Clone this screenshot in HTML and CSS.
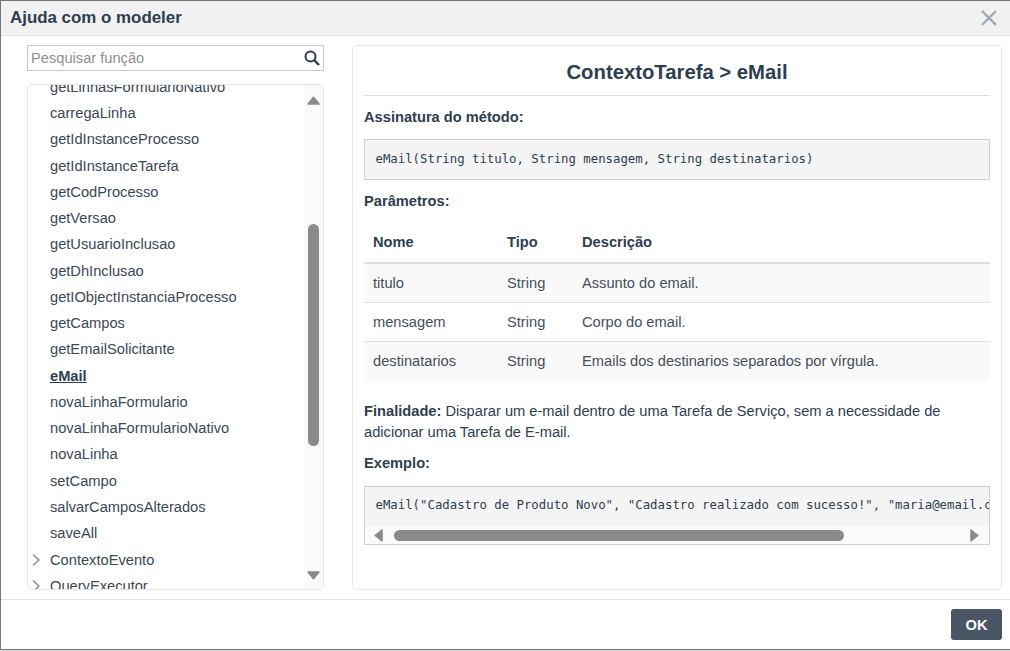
FILE: index.html
```html
<!doctype html>
<html>
    <head>
        <title>Ajuda com o modeler</title>
        <link rel="stylesheet" href="styles.css">
    </head>
    <body>
        <div class="modal">
            <div class="modal-header">
                <h1>Ajuda com o modeler</h1>
                <svg class="close" width="18" height="18" viewBox="0 0 18 18"><path d="M2 2 L16 16 M16 2 L2 16" stroke="#a3a9b2" stroke-width="2.4" fill="none"/></svg>
            </div>
            <div class="modal-body">
                <div class="sidebar">
                    <div class="search">
                        <span class="search-text">Pesquisar função</span>
                        <svg width="16" height="16" viewBox="0 0 16 16"><circle cx="6.5" cy="6.5" r="5" stroke="#2d3e50" stroke-width="2" fill="none"/><path d="M10.2 10.2 L15 15" stroke="#2d3e50" stroke-width="2.4"/></svg>
                    </div>
                    <div class="tree">
                        <ul class="tree-list">
                            <li>getLinhasFormularioNativo</li>
                            <li>carregaLinha</li>
                            <li>getIdInstanceProcesso</li>
                            <li>getIdInstanceTarefa</li>
                            <li>getCodProcesso</li>
                            <li>getVersao</li>
                            <li>getUsuarioInclusao</li>
                            <li>getDhInclusao</li>
                            <li>getIObjectInstanciaProcesso</li>
                            <li>getCampos</li>
                            <li>getEmailSolicitante</li>
                            <li class="active">eMail</li>
                            <li>novaLinhaFormulario</li>
                            <li>novaLinhaFormularioNativo</li>
                            <li>novaLinha</li>
                            <li>setCampo</li>
                            <li>salvarCamposAlterados</li>
                            <li>saveAll</li>
                            <li class="group"><svg width="10" height="14" viewBox="0 0 10 14"><path d="M2 1.5 L8 7 L2 12.5" stroke="#8c8c8c" stroke-width="1.4" fill="none"/></svg>ContextoEvento</li>
                            <li class="group"><svg width="10" height="14" viewBox="0 0 10 14"><path d="M2 1.5 L8 7 L2 12.5" stroke="#8c8c8c" stroke-width="1.4" fill="none"/></svg>QueryExecutor</li>
                        </ul>
                        <div class="vscroll">
                            <svg class="arrow-up" width="13" height="9" viewBox="0 0 13 9"><path d="M6.5 1.2 L12 8 L1 8 Z" fill="#8a8a8a" stroke="#8a8a8a" stroke-width="1.5" stroke-linejoin="round"/></svg>
                            <span class="vthumb"></span>
                            <svg class="arrow-down" width="13" height="9" viewBox="0 0 13 9"><path d="M6.5 7.8 L12 1 L1 1 Z" fill="#8a8a8a" stroke="#8a8a8a" stroke-width="1.5" stroke-linejoin="round"/></svg>
                        </div>
                    </div>
                </div>
                <div class="content">
                    <h2>ContextoTarefa &gt; eMail</h2>
                    <h3 class="label-sig">Assinatura do método:</h3>
                    <pre class="code">eMail(String titulo, String mensagem, String destinatarios)</pre>
                    <h3 class="label-params">Parâmetros:</h3>
                    <table class="params">
                        <thead>
                            <tr><th class="col-name">Nome</th><th class="col-type">Tipo</th><th>Descrição</th></tr>
                        </thead>
                        <tbody>
                            <tr><td>titulo</td><td>String</td><td>Assunto do email.</td></tr>
                            <tr><td>mensagem</td><td>String</td><td>Corpo do email.</td></tr>
                            <tr><td>destinatarios</td><td>String</td><td>Emails dos destinarios separados por vírgula.</td></tr>
                        </tbody>
                    </table>
                    <p class="purpose"><b>Finalidade:</b> Disparar um e-mail dentro de uma Tarefa de Serviço, sem a necessidade de adicionar uma Tarefa de E-mail.</p>
                    <h3 class="label-example">Exemplo:</h3>
                    <div class="example">
                        <pre class="example-code">eMail("Cadastro de Produto Novo", "Cadastro realizado com sucesso!", "maria@email.com")</pre>
                        <div class="hscroll">
                            <svg class="arrow-left" width="9" height="13" viewBox="0 0 9 13"><path d="M1.2 6.5 L8 1 L8 12 Z" fill="#8a8a8a" stroke="#8a8a8a" stroke-width="1.5" stroke-linejoin="round"/></svg>
                            <span class="hthumb"></span>
                            <svg class="arrow-right" width="9" height="13" viewBox="0 0 9 13"><path d="M7.8 6.5 L1 1 L1 12 Z" fill="#8a8a8a" stroke="#8a8a8a" stroke-width="1.5" stroke-linejoin="round"/></svg>
                        </div>
                    </div>
                </div>
            </div>
            <div class="modal-footer">
                <button class="ok">OK</button>
            </div>
        </div>
    </body>
</html>
```

FILE: styles.css
```css
* { margin: 0; padding: 0; box-sizing: border-box; }

body {
    width: 1010px;
    height: 651px;
    overflow: hidden;
    font-family: 'Liberation Sans', Arial, sans-serif;
    font-size: 14.67px;
    color: #2d3e50;
    background: #d9d9d9;
}

.modal {
    height: 650px;
    display: flex;
    flex-direction: column;
    background: white;
    border-top: solid 1px #777777;
    border-left: solid 1px #777777;
    border-bottom: solid 1px #777777;
}

.modal-header {
    height: 35px;
    flex: none;
    display: flex;
    align-items: center;
    justify-content: space-between;
    padding: 0 12px 0 9px;
    background: #f1f1f1;
    border-bottom: solid 1px #e2e2e2;
}

.modal-header h1 {
    font-size: 16.9px;
    font-weight: bold;
}

.modal-body {
    flex: 1;
    min-height: 0;
    display: flex;
    gap: 28px;
    padding: 9px 8px 9px 26px;
}

.sidebar {
    width: 297px;
    flex: none;
    display: flex;
    flex-direction: column;
    gap: 13px;
}

.search {
    height: 26px;
    flex: none;
    display: flex;
    align-items: center;
    justify-content: space-between;
    padding: 0 3px 0 3px;
    border: solid 1px #c8c8c8;
}

.search-text {
    color: #8f8f8f;
}

.tree {
    flex: 1;
    min-height: 0;
    position: relative;
    overflow: hidden;
    border: solid 1px #e6e6e6;
    border-radius: 5px;
}

.tree-list {
    list-style: none;
    margin-top: -11.25px;
    color: #3a4856;
}

.tree-list li {
    height: 26.28px;
    line-height: 26px;
    padding-left: 22px;
    white-space: nowrap;
}

.tree-list li.active {
    font-weight: bold;
    text-decoration: underline;
    color: #2d3e50;
}

.tree-list li.group {
    position: relative;
}

.tree-list li.group svg {
    position: absolute;
    left: 3px;
    top: 6px;
}

.vscroll {
    position: absolute;
    top: 0;
    right: 0;
    bottom: 0;
    width: 19px;
    background: #fafafa;
}

.vthumb {
    position: absolute;
    left: 4px;
    top: 139px;
    width: 11px;
    height: 222px;
    background: #8a8a8a;
    border-radius: 6px;
}

.arrow-up, .arrow-down {
    position: absolute;
    left: 3px;
}

.arrow-up {
    top: 11px;
}

.arrow-down {
    bottom: 9px;
}

.content {
    flex: 1;
    min-width: 0;
    border: solid 1px #e6e6e6;
    border-radius: 5px;
    padding: 0 11px;
}

.content h2 {
    height: 50px;
    line-height: 52px;
    font-size: 20.3px;
    font-weight: bold;
    text-align: center;
    border-bottom: solid 1px #dedede;
}

.content h3 {
    font-size: 14.67px;
    font-weight: bold;
}

.label-sig {
    margin-top: 13px;
    margin-bottom: 14px;
}

.code, .example-code {
    font-family: 'DejaVu Sans Mono', monospace;
    font-size: 12.33px;
    color: #2d3e50;
    background: #f4f4f4;
}

.code {
    height: 41px;
    line-height: 39px;
    padding-left: 10.5px;
    border: solid 1px #d0d0d0;
}

.label-params {
    margin-top: 13px;
}

.params {
    width: 100%;
    margin-top: 13px;
    border-collapse: collapse;
}

.params th {
    height: 41px;
    text-align: left;
    padding-left: 9px;
    font-size: 14.67px;
    border-bottom: solid 2px #dedede;
}

.params .col-name {
    width: 134px;
}

.params .col-type {
    width: 75px;
}

.params td {
    height: 39px;
    padding-left: 9px;
    color: #444f5c;
    border-bottom: solid 1px #e2e2e2;
}

.params tbody tr:nth-child(odd) td {
    background: #f9f9f9;
}

.params tr:last-child td {
    height: 40px;
    border-bottom: none;
}

.purpose {
    margin-top: 20px;
    line-height: 21px;
}

.label-example {
    margin-top: 12px;
}

.example {
    margin-top: 15px;
    border: solid 1px #d0d0d0;
    overflow: hidden;
}

.example-code {
    height: 39px;
    line-height: 37px;
    padding-left: 10.5px;
    overflow: hidden;
}

.hscroll {
    height: 18px;
    position: relative;
    background: #fafafa;
}

.hthumb {
    position: absolute;
    left: 29px;
    top: 4px;
    width: 450px;
    height: 11px;
    background: #8a8a8a;
    border-radius: 6px;
}

.arrow-left, .arrow-right {
    position: absolute;
    top: 3px;
}

.arrow-left {
    left: 9px;
}

.arrow-right {
    right: 10px;
}

.modal-footer {
    height: 50px;
    flex: none;
    display: flex;
    align-items: center;
    justify-content: flex-end;
    padding-right: 8px;
    border-top: solid 1px #e2e2e2;
}

.ok {
    width: 51px;
    height: 31px;
    border: none;
    border-radius: 3px;
    background: #4a5565;
    color: white;
    font-family: 'Liberation Sans', Arial, sans-serif;
    font-size: 14.67px;
    font-weight: bold;
}
```
